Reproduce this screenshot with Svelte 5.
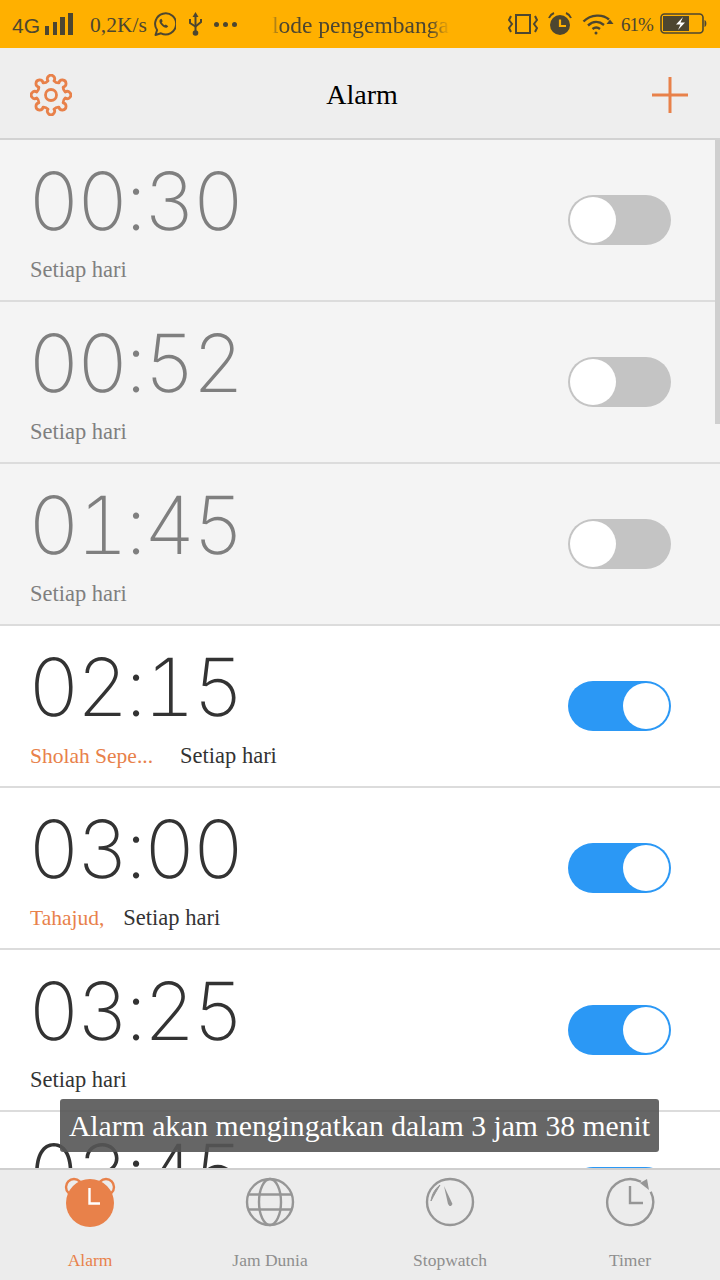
<script>
  const alarms = [
    { time: "00:30", on: false, repeat: "Setiap hari" },
    { time: "00:52", on: false, repeat: "Setiap hari" },
    { time: "01:45", on: false, repeat: "Setiap hari" },
    { time: "02:15", on: true, label: "Sholah Sepe...", gap: 27, repeat: "Setiap hari" },
    { time: "03:00", on: true, label: "Tahajud,", gap: 19, repeat: "Setiap hari" },
    { time: "03:25", on: true, repeat: "Setiap hari" },
    { time: "03:45", on: true, repeat: "Setiap hari" },
  ];

  // 8 rounded lobes around the centre of a 42 box
  function gearPath() {
    let d = "";
    const pt = (deg) => {
      const a = (deg * Math.PI) / 180;
      return (21 + 14.5 * Math.cos(a)).toFixed(2) + " " + (21 + 14.5 * Math.sin(a)).toFixed(2);
    };
    for (let i = 0; i < 8; i++) {
      const c = i * 45 - 90;
      d += (i == 0 ? "M" : "A6 6 0 0 0 ") + pt(c - 12);
      d += "A3.6 3.6 0 1 1 " + pt(c + 12);
    }
    return d + "A6 6 0 0 0 " + pt(-102) + "Z";
  }
</script>

<div class="screen">
  <div class="status">
    <span class="net">4G</span>
    <svg width="28" height="22" viewBox="0 0 28 22" fill="#4d4630">
      <rect x="0" y="13" width="4" height="9" />
      <rect x="8" y="9" width="4" height="13" />
      <rect x="15" y="4" width="5" height="18" />
      <rect x="23" y="0" width="5" height="22" />
    </svg>
    <span class="speed">0,2K/s</span>
    <svg class="wa" width="24" height="25" viewBox="0 0 24 25" fill="none" stroke="#4d4630">
      <path d="M3.500 23l1.600-5A10.500 10.500 0 1 1 9 21.300z" stroke-width="2" stroke-linejoin="round" />
      <path d="M8 7.500c-1 1-.8 3 1.200 5.300s4.300 3.500 5.800 2.700l1.300-1.300-2.500-1.800-1.100.9c-1.200-.5-2.400-1.900-3-3l1-1.100L9.500 6.700z" fill="#4d4630" stroke="none" />
    </svg>
    <svg class="usb" width="15" height="24" viewBox="0 0 15 24" fill="#4d4630" stroke="#4d4630">
      <path d="M7.500 3v18" stroke-width="2" />
      <path d="M7.500 0l3 5h-6z" stroke="none" />
      <path d="M2 7v4l5.500 3.500L13 10V7" fill="none" stroke-width="2" />
      <circle cx="7.500" cy="21" r="2.800" stroke="none" />
    </svg>
    <span class="dots"><i></i><i></i><i></i></span>
    <div class="marquee"><span>lode pengembangan</span></div>
    <div class="status-right">
      <svg width="30" height="22" viewBox="0 0 30 22" fill="none" stroke="#4d4630" stroke-width="2">
        <rect x="8" y="2" width="14" height="18" />
        <path d="M3 3L1 7 4 11 1 15 3 19M27 3l2 4-3 4 3 4-2 4" />
      </svg>
      <svg class="clock" width="24" height="24" viewBox="0 0 24 24" fill="#4d4630">
        <circle cx="12" cy="13" r="10" />
        <path d="M1 6C2 3.500 3.500 2 6 1M23 6c-1-2.500-2.500-4-5-5" fill="none" stroke="#4d4630" stroke-width="2" />
        <path d="M12 7.500V14h6" fill="none" stroke="#ffb000" stroke-width="2.200" />
      </svg>
      <svg class="wifi" width="32" height="22" viewBox="0 0 32 22" fill="none" stroke="#4d4630" stroke-width="2.400">
        <path d="M1.500 8.500C9 1 21 1 27 6.500" />
        <path d="M6 12.500c5-4.500 11-4.500 16-.5" />
        <path d="M10.500 16c2.500-2 5-2 7.500 0" />
        <circle cx="14" cy="20" r="1.500" fill="#4d4630" stroke="none" />
        <path d="M24.500 11h7l-3.500-4.500z" fill="#4d4630" stroke="none" />
      </svg>
      <span class="pct">61%</span>
      <svg class="batt" width="48" height="22" viewBox="0 0 48 22" fill="none">
        <rect x="1" y="1" width="42" height="19" rx="3.500" stroke="#4d4630" stroke-width="1.600" />
        <rect x="3" y="3" width="26" height="15" fill="#4d4630" />
        <path d="M44.500 7c2.500.5 2.500 6.500 0 7z" fill="#4d4630" />
        <path d="M23 4l-7 7.500h4.500L18 17l7-7.500h-4.500z" fill="#fff" />
      </svg>
    </div>
  </div>

  <header>
    <svg width="42" height="42" viewBox="0 0 42 42" fill="none" stroke="#e8814a" stroke-width="2.800" stroke-linejoin="round">
      <path d={gearPath()} />
      <circle cx="21" cy="21" r="5.500" />
    </svg>
    <h1>Alarm</h1>
    <svg width="36" height="36" viewBox="0 0 36 36" stroke="#e8814a" stroke-width="3">
      <path d="M18 0v36M0 18h36" />
    </svg>
  </header>

  <div class="list">
    {#each alarms as a}
      <div class="row" class:off={!a.on}>
        <div class="info">
          <div class="time">{a.time}</div>
          <div class="sub" style="gap:{a.gap ?? 0}px">
            {#if a.label}<span class="label">{a.label}</span>{/if}
            <span>{a.repeat}</span>
          </div>
        </div>
        <div class="switch" class:on={a.on}><div class="knob"></div></div>
      </div>
    {/each}
    <div class="scrollbar"></div>
    <div class="toast">Alarm akan mengingatkan dalam 3 jam 38 menit</div>
  </div>

  <nav>
    <div class="tab active">
      <svg width="52" height="50" viewBox="0 0 52 50" fill="none">
        <circle cx="10" cy="10" r="8" stroke="#e8814a" stroke-width="2.400" />
        <circle cx="42" cy="10" r="8" stroke="#e8814a" stroke-width="2.400" />
        <circle cx="26" cy="26" r="24" fill="#e8814a" />
        <path d="M25.500 11v15.500H36" stroke="#fff" stroke-width="2.400" />
      </svg>
      <span>Alarm</span>
    </div>
    <div class="tab">
      <svg width="50" height="50" viewBox="0 0 50 50" fill="none" stroke="#969696" stroke-width="2.400">
        <circle cx="25" cy="25" r="23" />
        <ellipse cx="25" cy="25" rx="11" ry="23" />
        <path d="M3.500 17.500h43M3.500 32.500h43" />
      </svg>
      <span>Jam Dunia</span>
    </div>
    <div class="tab">
      <svg width="50" height="50" viewBox="0 0 50 50" fill="none" stroke="#969696" stroke-width="2.400">
        <circle cx="25" cy="25" r="23" />
        <path d="M6 24C7 17 10 12 15 8 12 13 9 18 6 24z" fill="#969696" stroke-width="1" />
        <path d="M19 9l8.500 18-1.500 2h-1.500l-1.500-2z" fill="#969696" stroke="none" />
      </svg>
      <span>Stopwatch</span>
    </div>
    <div class="tab">
      <svg width="50" height="50" viewBox="0 0 50 50" fill="none" stroke="#969696" stroke-width="2.400">
        <path d="M36 4.800A23 23 0 1 0 45.700 14.700" />
        <path d="M25 9v17h13" />
        <path d="M35 6l7-4 2 11z" fill="#969696" stroke="none" />
      </svg>
      <span>Timer</span>
    </div>
  </nav>
</div>

<style>
  :global(body) {
    margin: 0;
  }
  .screen {
    width: 720px;
    height: 1280px;
    display: flex;
    flex-direction: column;
    overflow: hidden;
    background: #fff;
    font-family: "Liberation Serif", serif;
  }
  .status {
    height: 48px;
    flex: none;
    box-sizing: border-box;
    background: #ffb000;
    color: #4d4630;
    display: flex;
    align-items: center;
    padding: 0 12px;
  }
  .net {
    font: 21px "Liberation Sans", sans-serif;
    width: 33px;
    margin-top: 4px;
  }
  .speed {
    font-size: 21.500px;
    margin-left: 17px;
    width: 62px;
    white-space: nowrap;
    margin-top: 2px;
  }
  .usb {
    margin-left: 12px;
  }
  .dots {
    display: flex;
    gap: 4px;
    margin-left: 11px;
  }
  .dots i {
    width: 5px;
    height: 5px;
    border-radius: 50%;
    background: #4d4630;
  }
  .marquee {
    width: 178px;
    margin-left: 35px;
    overflow: hidden;
    white-space: nowrap;
    font-size: 23.500px;
    margin-top: 3px;
    mask-image: linear-gradient(90deg, transparent, #000 8px, #000 158px, transparent);
  }
  .status-right {
    margin-left: auto;
    display: flex;
    align-items: center;
  }
  .clock {
    margin-left: 10px;
  }
  .wifi {
    margin-left: 10px;
  }
  .pct {
    font-size: 19px;
    letter-spacing: -1px;
    margin-left: 7px;
    width: 32px;
    white-space: nowrap;
    margin-top: 2px;
  }
  .batt {
    margin-left: 7px;
  }
  header {
    height: 92px;
    flex: none;
    box-sizing: border-box;
    background: #eeeeee;
    border-bottom: 2px solid #d2d2d2;
    display: flex;
    align-items: center;
    justify-content: space-between;
    padding: 4px 32px 0 30px;
  }
  h1 {
    margin: 0;
    font-size: 28px;
    font-weight: 400;
    color: #000;
  }
  .list {
    flex: 1;
    position: relative;
    overflow: hidden;
  }
  .row {
    height: 162px;
    box-sizing: border-box;
    border-bottom: 2px solid #dcdcdc;
    display: flex;
    align-items: flex-start;
    justify-content: space-between;
    padding: 0 49px 0 30px;
    color: #333;
  }
  .row.off {
    background: #f4f4f4;
    color: #7f7f7f;
  }
  .time {
    font: 200 80px/1 Inter, sans-serif;
    font-variant-numeric: tabular-nums;
    text-rendering: geometricPrecision;
    letter-spacing: -3px;
    margin: 22px 0 0 -2px;
  }
  .sub {
    display: flex;
    font-size: 22.500px;
    line-height: 28px;
    margin-top: 14px;
  }
  .label {
    color: #e8814a;
    font-size: 21.500px;
  }
  .switch {
    width: 103px;
    height: 50px;
    margin-top: 55px;
    box-sizing: border-box;
    border-radius: 25px;
    background: #c4c4c4;
    padding: 2px;
    display: flex;
  }
  .switch.on {
    background: #2b98f5;
    justify-content: flex-end;
  }
  .knob {
    width: 46px;
    height: 46px;
    border-radius: 50%;
    background: #fff;
  }
  .scrollbar {
    position: absolute;
    top: 0;
    right: 0;
    width: 5px;
    height: 284px;
    background: #cfcfcf;
  }
  .toast {
    position: absolute;
    left: 60px;
    top: 959px;
    width: 599px;
    height: 53px;
    box-sizing: border-box;
    background: rgba(85, 85, 85, 0.9);
    border-radius: 3px;
    color: #fff;
    font-size: 29.700px;
    line-height: 55px;
    text-align: center;
    white-space: nowrap;
  }
  nav {
    height: 112px;
    flex: none;
    box-sizing: border-box;
    background: #ececec;
    border-top: 2px solid #cfcfcf;
    display: grid;
    grid-template-columns: repeat(4, 1fr);
  }
  .tab {
    display: flex;
    flex-direction: column;
    align-items: center;
    padding-top: 7px;
    color: #8f8f8f;
    font-size: 17.500px;
  }
  .tab span {
    margin-top: 23px;
  }
  .tab.active {
    color: #e8814a;
  }
</style>
